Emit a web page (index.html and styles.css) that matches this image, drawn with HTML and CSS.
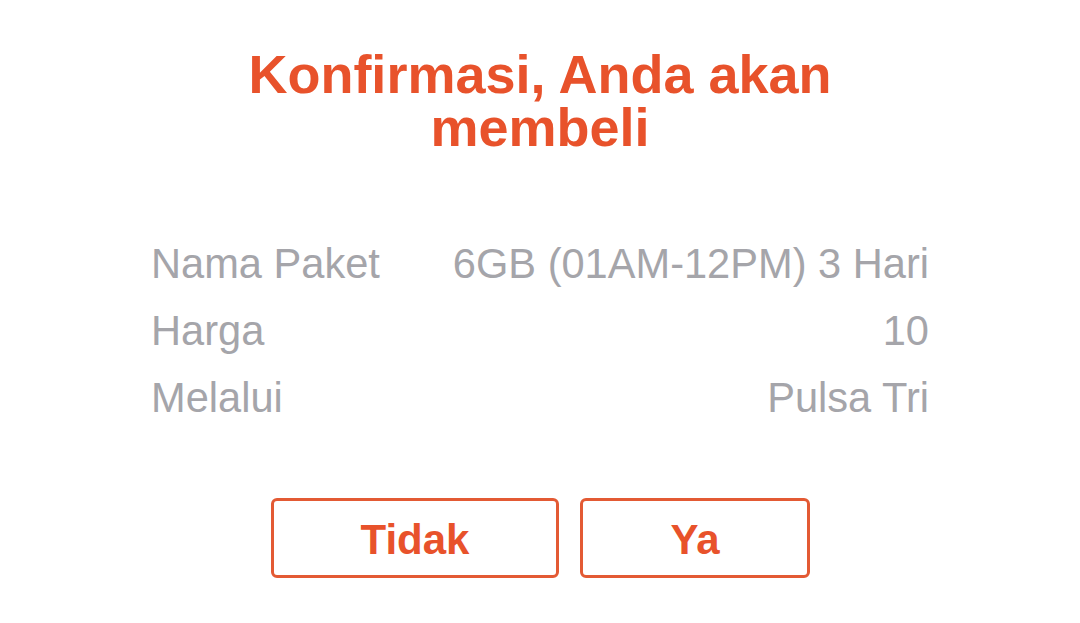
FILE: index.html
```html
<!DOCTYPE html>
<html lang="id">
<head>
<meta charset="UTF-8">
<meta name="viewport" content="width=device-width,initial-scale=1">
<title>Konfirmasi</title>
<link rel="stylesheet" href="styles.css">
</head>
<body>

<div class="confirm">
  <h1 class="title">Konfirmasi, Anda akan membeli</h1>

  <div class="detail">
    <span class="label">Nama Paket</span><span class="value">6GB (01AM-12PM) 3 Hari</span>
    <span class="label">Harga</span><span class="value">10</span>
    <span class="label">Melalui</span><span class="value">Pulsa Tri</span>
  </div>

  <div class="actions">
    <button class="btn">Tidak</button>
    <button class="btn">Ya</button>
  </div>
</div>

</body>
</html>
```

FILE: styles.css
```css
*{margin:0;padding:0;box-sizing:border-box;font-family:"Liberation Sans",Arial,sans-serif}
body{background:#fff}
.confirm{display:flex;flex-direction:column;align-items:center}
.title{width:700px;margin-top:48px;text-align:center;font-size:54px;line-height:53px;font-weight:700;color:#e8522b}
.detail{width:778px;margin-top:76px;display:grid;grid-template-columns:auto auto;justify-content:space-between;font-size:41.6px;line-height:67px;color:#a5a5aa}
.value{text-align:right}
.actions{display:flex;gap:21px;margin-top:67px}
.btn{height:80px;padding:3px 87px 0;background:#fff;border:3px solid #e35a34;border-radius:6px;font-size:42px;font-weight:700;line-height:71px;color:#e8522b;cursor:pointer}
```
